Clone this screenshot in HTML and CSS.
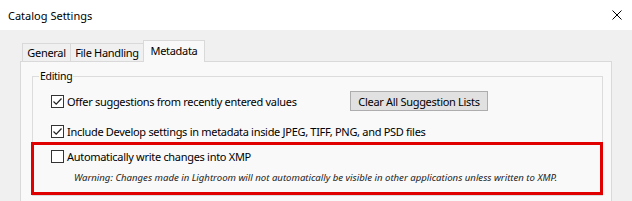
FILE: index.html
```html
<!DOCTYPE html>
<html lang="en">
<head>
    <meta charset="UTF-8">
    <meta name="viewport" content="width=device-width, initial-scale=1.0">
    <title>Catalog Settings</title>
    <link rel="stylesheet" href="styles.css">
</head>
<body>

    <div class="titlebar">
        <span class="title">Catalog Settings</span>
        <svg class="close" width="10" height="10" viewBox="0 0 10 10">
            <path d="M0.5 0.5 L9.5 9.5 M9.5 0.5 L0.5 9.5" stroke="#000" stroke-width="1" fill="none"/>
        </svg>
    </div>

    <div class="dialog">
        <div class="tabs">
            <div class="tab tab-general">General</div>
            <div class="tab tab-files">File Handling</div>
            <div class="tab tab-meta active">Metadata</div>
        </div>

        <div class="panel">
            <fieldset class="group">
                <legend>Editing</legend>

                <div class="row">
                    <label class="check">
                        <span class="box">
                            <svg width="11" height="11" viewBox="0 0 11 11"><path d="M1.5 5.5 L4.2 8.2 L9.5 2.5" stroke="#222" stroke-width="1.2" fill="none"/></svg>
                        </span>
                        Offer suggestions from recently entered values
                    </label>
                    <button class="button">Clear All Suggestion Lists</button>
                </div>

                <div class="row last">
                    <label class="check">
                        <span class="box">
                            <svg width="11" height="11" viewBox="0 0 11 11"><path d="M1.5 5.5 L4.2 8.2 L9.5 2.5" stroke="#222" stroke-width="1.2" fill="none"/></svg>
                        </span>
                        Include Develop settings in metadata inside JPEG, TIFF, PNG, and PSD files
                    </label>
                </div>

                <div class="highlight">
                    <div class="row">
                        <label class="check">
                            <span class="box"></span>
                            Automatically write changes into XMP
                        </label>
                    </div>
                    <div class="warning">Warning: Changes made in Lightroom will not automatically be visible in other applications unless written to XMP.</div>
                </div>
            </fieldset>
        </div>
    </div>

</body>
</html>
```

FILE: styles.css
```css
html, body {
    margin: 0;
    padding: 0;
}
body {
    width: 632px;
    height: 201px;
    overflow: hidden;
    background-color: #f0f0f0;
    color: #000;
    font-family: "Noto Sans", sans-serif;
    font-size: 11px;
    letter-spacing: -0.3px;
}
.titlebar {
    height: 30px;
    background-color: #fff;
    display: flex;
    align-items: center;
    justify-content: space-between;
    padding: 0 10px 0 8px;
}
.title {
    font-size: 11px;
    letter-spacing: 0;
}
.dialog {
    padding: 10px 0 0 20px;
}
.tabs {
    display: flex;
    align-items: flex-end;
    padding-left: 3px;
    height: 21px;
}
.tab {
    height: 17px;
    line-height: 17px;
    text-align: center;
    border: 1px solid #d9d9d9;
    border-bottom: none;
    margin-left: -1px;
    background-color: #f0f0f0;
}
.tab-general {
    width: 47px;
}
.tab-files {
    width: 72px;
}
.tab-meta {
    width: 60px;
}
.tab.active {
    height: 21px;
    line-height: 19px;
    background-color: #f9f9f9;
    margin-bottom: -1px;
    position: relative;
}
.panel {
    width: 590px;
    height: 139px;
    border: 1px solid #d9d9d9;
    border-bottom: none;
    background-color: #f9f9f9;
    overflow: hidden;
}
.group {
    margin: 8px 8px 0 11px;
    padding: 8px 0 0 0;
    border: 1px solid #dcdcdc;
    min-width: 0;
}
.group legend {
    font-size: 10.5px;
    line-height: 13px;
    padding: 0 1px;
    margin-left: 6px;
}
.row {
    display: grid;
    grid-template-columns: 317px auto;
    align-items: center;
    height: 20px;
    margin-bottom: 10px;
}
.row.last {
    margin-bottom: 1px;
}
.check {
    display: flex;
    align-items: center;
    gap: 3px;
    padding-left: 18px;
    white-space: nowrap;
}
.box {
    width: 11px;
    height: 11px;
    border: 1px solid #333;
    background-color: #fff;
    display: flex;
}
.button {
    justify-self: start;
    width: 138px;
    height: 20px;
    padding: 0;
    background-color: #e1e1e1;
    border: 1px solid #adadad;
    border-radius: 0;
    font-family: "Noto Sans", sans-serif;
    font-size: 11px;
    letter-spacing: -0.3px;
    color: #000;
}
.highlight {
    border: 3px solid #e00000;
    margin: 0 -1px 0 -2px;
    padding: 1px 0 7px 0;
}
.highlight .row {
    margin-bottom: 5px;
}
.highlight .check {
    padding-left: 17px;
}
.warning {
    font-style: italic;
    font-size: 9.6px;
    line-height: 14px;
    letter-spacing: 0;
    color: #222;
    padding-left: 40px;
    white-space: nowrap;
}
```
